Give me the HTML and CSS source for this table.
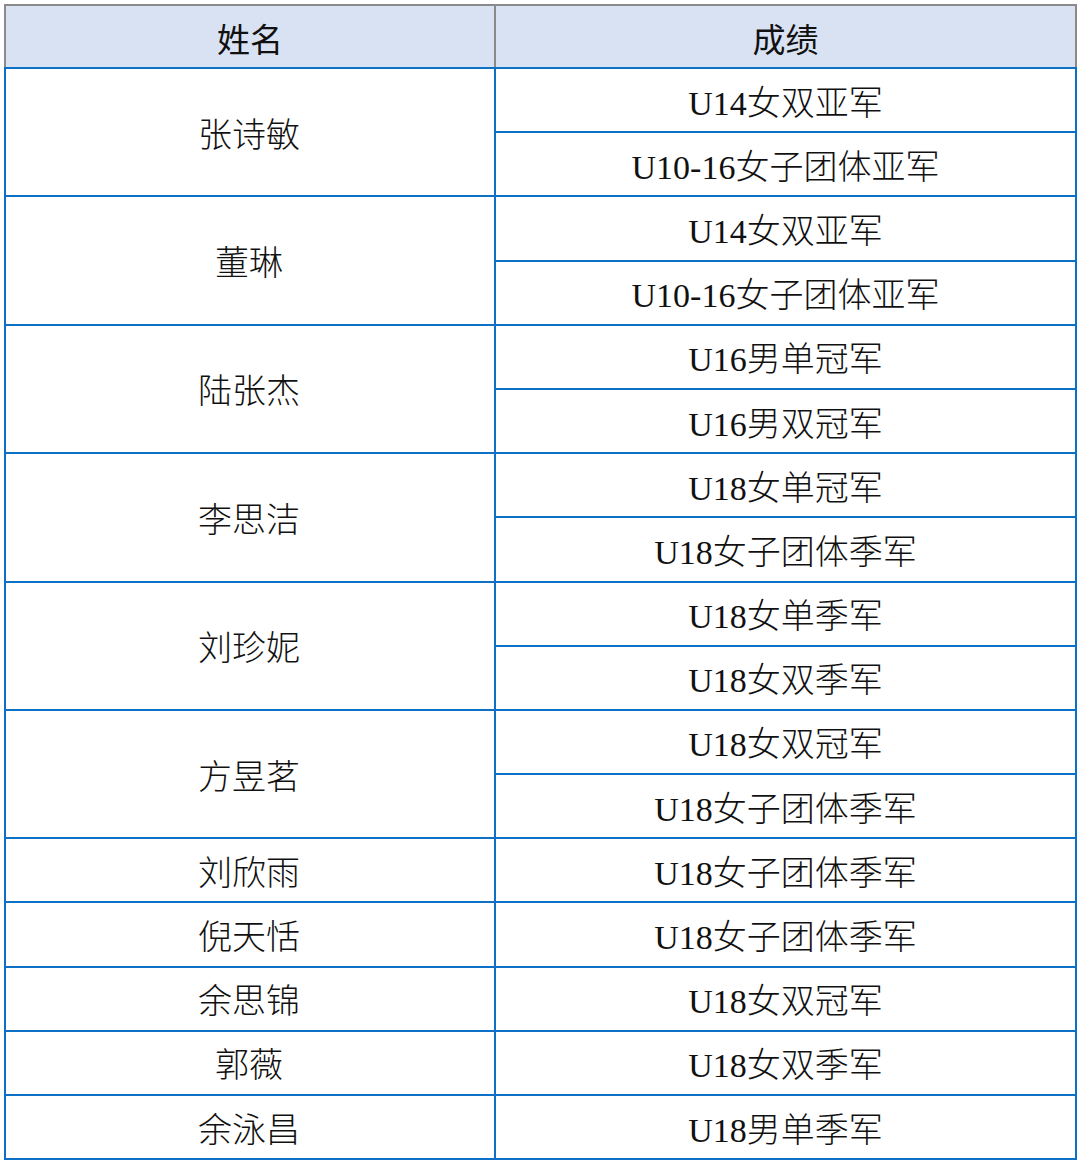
FILE: index.html
```html
<!DOCTYPE html>
<html lang="zh-CN">
<head>
<meta charset="utf-8">
<title>成绩</title>
<link rel="stylesheet" href="styles.css">
</head>
<body>
<table class="results">
  <thead>
    <tr class="head-row"><th class="col-name">姓名</th><th class="col-result">成绩</th></tr>
  </thead>
  <tbody>
    <tr><td rowspan="2" class="name">张诗敏</td><td>U14女双亚军</td></tr>
    <tr><td>U10-16女子团体亚军</td></tr>
    <tr><td rowspan="2" class="name">董琳</td><td>U14女双亚军</td></tr>
    <tr><td>U10-16女子团体亚军</td></tr>
    <tr><td rowspan="2" class="name">陆张杰</td><td>U16男单冠军</td></tr>
    <tr><td>U16男双冠军</td></tr>
    <tr><td rowspan="2" class="name">李思洁</td><td>U18女单冠军</td></tr>
    <tr><td>U18女子团体季军</td></tr>
    <tr><td rowspan="2" class="name">刘珍妮</td><td>U18女单季军</td></tr>
    <tr><td>U18女双季军</td></tr>
    <tr><td rowspan="2" class="name">方昱茗</td><td>U18女双冠军</td></tr>
    <tr><td>U18女子团体季军</td></tr>
    <tr><td class="name">刘欣雨</td><td>U18女子团体季军</td></tr>
    <tr><td class="name">倪天恬</td><td>U18女子团体季军</td></tr>
    <tr><td class="name">余思锦</td><td>U18女双冠军</td></tr>
    <tr><td class="name">郭薇</td><td>U18女双季军</td></tr>
    <tr><td class="name">余泳昌</td><td>U18男单季军</td></tr>
  </tbody>
</table>
</body>
</html>
```
FILE: styles.css
```css
html, body {
  margin: 0;
  padding: 0;
  background: #ffffff;
}
body {
  padding: 4px 0 0 4px;
}
.results {
  border-collapse: collapse;
  width: 1069px;
  table-layout: fixed;
  font-family: "Liberation Serif", "Noto Sans CJK SC", serif;
  font-size: 34px;
  font-weight: 300;
  color: #111;
}
.col-name { width: 488px; }
.col-result { width: 579px; }
.results th {
  height: 58px;
  padding: 3px 0 0;
  background: #d9e2f3;
  font-family: "Noto Sans CJK SC", sans-serif;
  font-weight: 400;
  font-size: 33px;
  color: #111;
  text-align: center;
  vertical-align: middle;
  border: 2px solid #8a8a8a;
  border-bottom: 2px solid #0b70c6;
}
.results td {
  height: 55.2px;
  padding: 7px 0 0;
  text-align: center;
  vertical-align: middle;
  border: 2px solid #0b70c6;
  line-height: 1;
  white-space: nowrap;
}
.results td.name {
  padding-right: 2px;
}
```
